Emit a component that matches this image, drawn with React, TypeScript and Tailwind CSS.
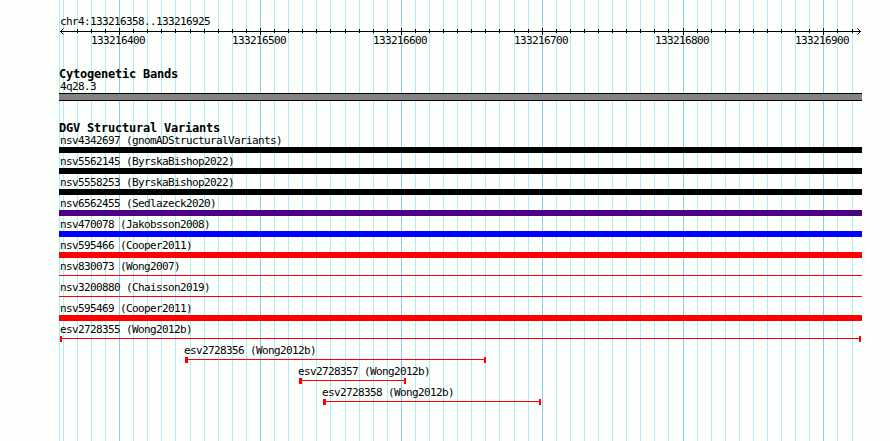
type Variant = {
  id: string;
  source: string;
  kind: "bar" | "line" | "range";
  color: string;
  start: number;
  end: number;
  cap?: number;
};

const LEFT = 59;
const RIGHT = 862;

const minorLines = [
  59, 63, 77, 91, 105, 133, 147, 161, 175, 190, 204, 218, 232, 246, 274, 288,
  302, 316, 330, 345, 359, 373, 387, 415, 429, 443, 457, 471, 485, 499, 514,
  528, 556, 570, 584, 598, 612, 626, 640, 654, 668, 697, 711, 725, 739, 753,
  767, 781, 795, 809, 837, 852,
];

const majorLines = [
  { x: 119, label: "133216400" },
  { x: 260, label: "133216500" },
  { x: 401, label: "133216600" },
  { x: 542, label: "133216700" },
  { x: 683, label: "133216800" },
  { x: 823, label: "133216900" },
];

const full = { start: LEFT, end: RIGHT };

const variants: Variant[] = [
  { id: "nsv4342697", source: "gnomADStructuralVariants", kind: "bar", color: "bg-black", ...full },
  { id: "nsv5562145", source: "ByrskaBishop2022", kind: "bar", color: "bg-black", ...full },
  { id: "nsv5558253", source: "ByrskaBishop2022", kind: "bar", color: "bg-black", ...full },
  { id: "nsv6562455", source: "Sedlazeck2020", kind: "bar", color: "bg-[#4b0082]", ...full },
  { id: "nsv470078", source: "Jakobsson2008", kind: "bar", color: "bg-[#0000ff]", ...full },
  { id: "nsv595466", source: "Cooper2011", kind: "bar", color: "bg-[#ff0000]", ...full },
  { id: "nsv830073", source: "Wong2007", kind: "line", color: "bg-[#ff0000]", ...full },
  { id: "nsv3200880", source: "Chaisson2019", kind: "line", color: "bg-[#ff0000]", ...full },
  { id: "nsv595469", source: "Cooper2011", kind: "bar", color: "bg-[#ff0000]", ...full },
  { id: "esv2728355", source: "Wong2012b", kind: "range", color: "bg-[#ff0000]", start: 60, end: 861, cap: 2 },
  { id: "esv2728356", source: "Wong2012b", kind: "range", color: "bg-[#ff0000]", start: 185, end: 486, cap: 3 },
  { id: "esv2728357", source: "Wong2012b", kind: "range", color: "bg-[#ff0000]", start: 299, end: 406, cap: 3 },
  { id: "esv2728358", source: "Wong2012b", kind: "range", color: "bg-[#ff0000]", start: 323, end: 541, cap: 3 },
];

function GridLines() {
  return (
    <svg
      className="absolute inset-0"
      width="890"
      height="441"
      shapeRendering="crispEdges"
    >
      {minorLines.map((x) => (
        <rect key={x} x={x} y="0" width="1" height="441" fill="#afeeee" />
      ))}
      {majorLines.map(({ x }) => (
        <rect key={x} x={x} y="0" width="1" height="441" fill="#87ceeb" />
      ))}
    </svg>
  );
}

function Ruler() {
  return (
    <svg className="block" width="890" height="19">
      <g shapeRendering="crispEdges">
        <rect x="60" y="3" width="801" height="1" />
        {minorLines
          .filter((x) => x > 63)
          .map((x) => (
            <rect key={x} x={x} y="1" width="1" height="4" />
          ))}
        {majorLines.map(({ x }) => (
          <rect key={x} x={x} y="0" width="1" height="7" />
        ))}
      </g>
      <path
        d="M63.5 0.5L60.5 3.5L63.5 6.5M857.5 0.5L860.5 3.5L857.5 6.5"
        fill="none"
        stroke="black"
      />
      {majorLines.map(({ x, label }) => (
        <text key={x} x={x - 28} y="16">
          {label}
        </text>
      ))}
    </svg>
  );
}

function TrackTitle({ children }: { children: string }) {
  return (
    <h2 className="pl-[59px] text-[12px] leading-[14px] font-bold tracking-[-0.224px]">
      {children}
    </h2>
  );
}

function Glyph({ variant }: { variant: Variant }) {
  const { kind, color, cap, start, end } = variant;

  return (
    <div
      className="flex h-[6px]"
      style={{ marginLeft: start, width: end - start }}
    >
      {kind === "range" && (
        <div className={`h-full shrink-0 ${color}`} style={{ width: cap }} />
      )}
      <div
        className={`grow ${color} ${kind === "bar" ? "h-full" : "mt-[2px] h-px"}`}
      />
      {kind === "range" && <div className={`h-full w-[2px] ${color}`} />}
    </div>
  );
}

function VariantRow({ variant }: { variant: Variant }) {
  const labelStart = variant.start > 60 ? variant.start - 1 : 60;

  return (
    <div className="h-[21px]">
      <div className="h-[12px]" style={{ marginLeft: labelStart }}>
        {variant.id} ({variant.source})
      </div>
      <Glyph variant={variant} />
    </div>
  );
}

export default function App() {
  return (
    <div className="relative h-[441px] w-[890px] overflow-hidden bg-[#fdfffc] font-['DejaVu_Sans_Mono',monospace] text-[11px] leading-[12px] tracking-[-0.623px] whitespace-nowrap text-black">
      <GridLines />

      <main className="relative pt-4">
        <div className="h-[12px] pl-[60px]">chr4:133216358..133216925</div>
        <Ruler />

        <section className="mt-5">
          <TrackTitle>Cytogenetic Bands</TrackTitle>
          <div className="h-[12px] pl-[60px]">4q28.3</div>
          <div className="ml-[59px] h-[8px] w-[803px] border-y border-black bg-[#848284]" />
        </section>

        <section className="mt-5">
          <TrackTitle>DGV Structural Variants</TrackTitle>
          {variants.map((variant) => (
            <VariantRow key={variant.id} variant={variant} />
          ))}
        </section>
      </main>
    </div>
  );
}
